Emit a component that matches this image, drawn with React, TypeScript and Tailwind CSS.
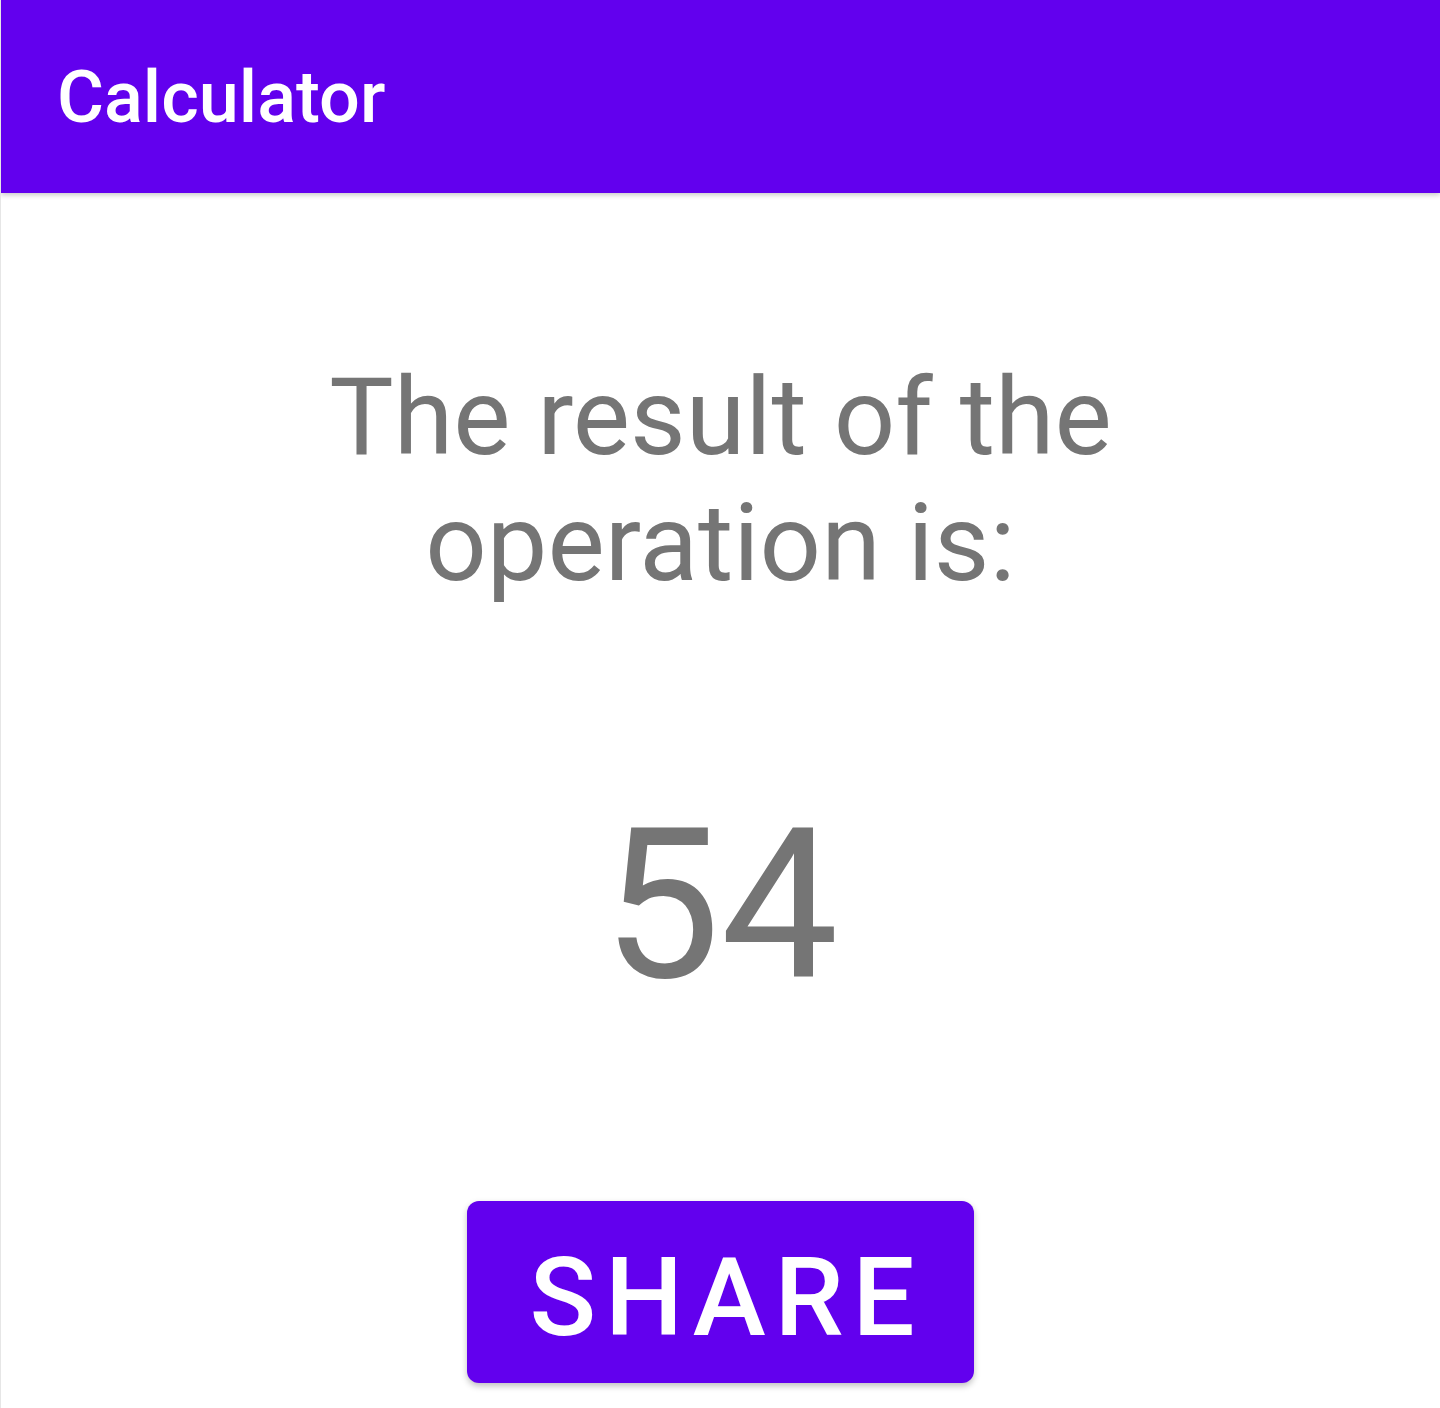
import React from "react";

export default function App() {
  return (
    <div
      className="min-h-screen h-[1408px] w-full bg-white border-l border-[#e6e6e6] flex flex-col overflow-hidden"
      style={{ fontFamily: "Roboto, 'Noto Sans', sans-serif" }}
    >
      <header className="h-[193px] shrink-0 bg-[#6200EE] flex items-center pl-[56px] shadow-[0_2px_5px_rgba(0,0,0,0.22)] relative z-10">
        <h1 className="text-white text-[72px] font-medium leading-none pt-[3px]">Calculator</h1>
      </header>
      <main className="flex flex-col items-center">
        <p className="mt-[161px] text-[#757575] text-[108px] leading-[126px] text-center">
          The result of the
          <br />
          operation is:
        </p>
        <div className="mt-[194px] text-[#757575] text-[210px] leading-none">54</div>
        <button className="mt-[191px] h-[182px] pl-[63px] pr-[51px] pt-[12px] rounded-[12px] bg-[#6200EE] text-white text-[110px] font-medium tracking-[0.08em] leading-none shadow-[0_3px_6px_rgba(0,0,0,0.25)] flex items-center justify-center">
          SHARE
        </button>
      </main>
    </div>
  );
}
